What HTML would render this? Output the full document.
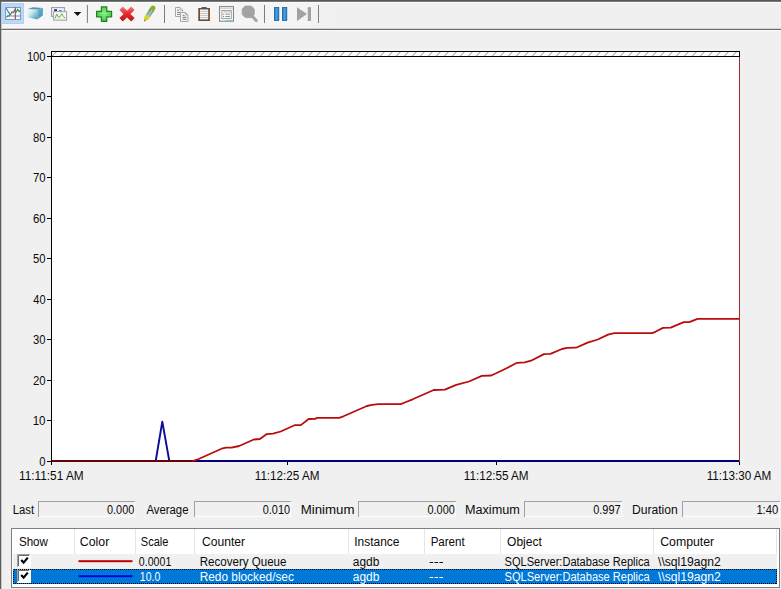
<!DOCTYPE html>
<html>
<head>
<meta charset="utf-8">
<title>Performance Monitor</title>
<style>
html,body{margin:0;padding:0;background:#f0f0f0;overflow:hidden;}
body{width:781px;height:589px;position:relative;font-family:"Liberation Sans",sans-serif;}
svg{position:absolute;left:0;top:0;display:block;}
text{font-family:"Liberation Sans",sans-serif;font-size:12px;fill:#0a0a0a;}
text.w{fill:#ffffff;}
</style>
</head>
<body>
<svg width="781" height="589" viewBox="0 0 781 589">
<defs>
  <linearGradient id="tb" x1="0" y1="0" x2="0" y2="1">
    <stop offset="0" stop-color="#fcfcfc"/><stop offset="1" stop-color="#f0f0f0"/>
  </linearGradient>
  <pattern id="hatch" width="8" height="8" patternUnits="userSpaceOnUse" x="48.3" y="52">
    <rect width="8" height="8" fill="#fff"/>
    <path d="M-1,9 L9,-1 M-1,1 L1,-1 M7,9 L9,7" stroke="#6c6c6c" stroke-width="0.8"/>
  </pattern>
  <linearGradient id="gPause" x1="0" y1="0" x2="1" y2="0">
    <stop offset="0" stop-color="#1d6fb8"/><stop offset="0.5" stop-color="#45a6e8"/><stop offset="1" stop-color="#1d6fb8"/>
  </linearGradient>
  <linearGradient id="gCube" x1="0" y1="0" x2="1" y2="1">
    <stop offset="0" stop-color="#ffffff"/><stop offset="0.35" stop-color="#cfeaf4"/><stop offset="1" stop-color="#3f97ba"/>
  </linearGradient>
  <linearGradient id="gCube2" x1="0" y1="0" x2="1" y2="1">
    <stop offset="0" stop-color="#6fb6d2"/><stop offset="1" stop-color="#3f93b4"/>
  </linearGradient>
  <radialGradient id="gPlus" cx="0.5" cy="0.45" r="0.6">
    <stop offset="0" stop-color="#8af08a"/><stop offset="1" stop-color="#3fc43f"/>
  </radialGradient>
  <linearGradient id="gX" x1="0" y1="6" x2="0" y2="22" gradientUnits="userSpaceOnUse">
    <stop offset="0" stop-color="#e58a8a"/><stop offset="0.45" stop-color="#ee2a2a"/><stop offset="1" stop-color="#b81414"/>
  </linearGradient>
  <linearGradient id="tbh" x1="0" y1="0" x2="1" y2="0">
    <stop offset="0" stop-color="#f6f6f6"/><stop offset="0.85" stop-color="#f4f4f4"/><stop offset="1" stop-color="#f0f0f0"/>
  </linearGradient>
</defs>

<!-- window background -->
<rect x="0" y="0" width="781" height="589" fill="#f0f0f0"/>
<!-- toolbar -->
<rect x="0" y="0" width="781" height="1" fill="#585858"/>
<rect x="0" y="1" width="781" height="1" fill="#7a7a7a"/>
<rect x="1" y="3" width="340" height="25" fill="url(#tbh)"/>
<rect x="1" y="2" width="780" height="1" fill="#fbfbfb"/>
<rect x="0" y="0" width="1" height="589" fill="#5e5e5e"/>
<rect x="1" y="2" width="1" height="587" fill="#c8c8c8"/>
<rect x="1" y="29" width="780" height="1" fill="#6c6c6c"/>
<rect x="1" y="28" width="780" height="1" fill="#d2d2d2"/>
<rect x="2" y="30" width="779" height="1" fill="#fbfbfb"/>

<!-- TOOLBAR ICONS -->
<g id="icons">
  <!-- selected button bg -->
  <rect x="1.5" y="3.5" width="22" height="20" fill="#bbd9f6" stroke="#b0d0f0" stroke-width="1"/>
  <!-- icon1: graph -->
  <g>
    <rect x="5.5" y="7.5" width="15" height="12" fill="#eff5fc" stroke="#7c98c9" stroke-width="1"/>
    <rect x="6" y="16.6" width="14" height="2.4" fill="#fcf6f8"/>
    <path d="M11,16 H20" stroke="#7686b8" stroke-width="1"/>
    <path d="M6.2,8.2 L10,14.6" stroke="#5b6bb8" stroke-width="1.1"/>
    <path d="M6.4,17.4 L8,15.6 L9.4,16.2 L12,12 L13.4,12.6 L15,9.4" fill="none" stroke="#2e8648" stroke-width="1.15"/>
    <path d="M16,12.6 L17.6,9.4 L19.2,11.6 L20,10.6" fill="none" stroke="#3a9a3a" stroke-width="1.15"/>
    <rect x="14.8" y="7.5" width="1" height="12" fill="#9c3050"/>
  </g>
  <!-- icon2: cube -->
  <g>
    <path d="M27.6,9 L37.5,9.6 L37.2,19.6 L28.4,17.4 Z" fill="url(#gCube)"/>
    <path d="M27.6,9 L33,7.2 L43,8 L37.5,9.6 Z" fill="#5196b3"/>
    <path d="M37.5,9.6 L43,8 L42.8,15.6 L37.2,19.6 Z" fill="url(#gCube2)"/>
    <path d="M27.6,9 L28.4,17.4" stroke="#cfeaf4" stroke-width="0.7" fill="none"/>
  </g>
  <!-- icon3: picture stack -->
  <g>
    <rect x="51.6" y="7.6" width="12.8" height="8.8" fill="#eef1f8" stroke="#8a97b2" stroke-width="1"/>
    <rect x="54.2" y="9.2" width="2.8" height="1.9" fill="#6a0f35"/>
    <rect x="59" y="10" width="2.6" height="1.2" fill="#4e78c8"/>
    <rect x="53.6" y="11.6" width="13" height="8.6" fill="#f3f7ef" stroke="#97a3b8" stroke-width="1"/>
    <path d="M55,18.6 L56.8,14 L58.4,17.2 L60,16.8 L61.8,13.6 L63.4,16.6 L65.2,18" fill="none" stroke="#6db05c" stroke-width="1"/>
    <path d="M55,19 H65.5" stroke="#cfe0b8" stroke-width="0.8"/>
  </g>
  <!-- dropdown arrow -->
  <path d="M73.7,12 H81.3 L77.5,16.1 Z" fill="#111"/>
  <!-- separators -->
  <rect x="86.9" y="5" width="1" height="18" fill="#7d7d7d"/>
  <rect x="164" y="5" width="1" height="18" fill="#7d7d7d"/>
  <rect x="264" y="5" width="1" height="18" fill="#7d7d7d"/>
  <rect x="318" y="5" width="1" height="18" fill="#7d7d7d"/>
  <!-- plus -->
  <path d="M101.4,6.9 H106.8 V11.4 H111.6 V16.8 H106.8 V21.3 H101.4 V16.8 H96.6 V11.4 H101.4 Z" fill="url(#gPlus)" stroke="#1f801f" stroke-width="1.2" stroke-linejoin="round"/>
  <!-- red X -->
  <path d="M121.1,8.2 L132.9,19.7 M132.9,8.200 L121.1,19.7" stroke="url(#gX)" stroke-width="4.8" stroke-linecap="butt"/>
  <!-- pencil -->
  <g>
    <path d="M144.5,16.2 L148.9,19.1 L144.2,21.5 Z" fill="#cdce1c"/>
    <path d="M144.2,21.5 L144.5,19.5 L146,20.5 Z" fill="#77770f"/>
    <path d="M148.3,15.25 L146.6,17.85" stroke="#d6d82c" stroke-width="5"/>
    <path d="M151.58,10.18 L148.1,15.55" stroke="#86a9b6" stroke-width="5"/>
    <path d="M152.9,8.1 L151.4,10.4" stroke="#8dac2c" stroke-width="5" stroke-linecap="round"/>
    <path d="M151.7,10 L151.2,10.800" stroke="#6a9c48" stroke-width="5"/>
    <path d="M152.3,9.6 L148.2,16" stroke="#bcd6dc" stroke-width="1.1" opacity="0.8"/>
  </g>
  <!-- copy -->
  <g>
    <path d="M175.5,7.5 H180 L182.5,10 V16.5 H175.5 Z" fill="#f6f6f6" stroke="#a4a8ac" stroke-width="1"/>
    <path d="M180,7.5 V10 H182.5" fill="none" stroke="#a4a8ac" stroke-width="0.8"/>
    <path d="M177,10.2 H179 M177,12.4 H181 M177,14.4 H180" stroke="#7c858c" stroke-width="1"/>
    <path d="M180.5,12.5 H185.5 L188,15 V21.5 H180.5 Z" fill="#f6f6f6" stroke="#a4a8ac" stroke-width="1"/>
    <path d="M185.5,12.500 V15 H188" fill="none" stroke="#a4a8ac" stroke-width="0.8"/>
    <path d="M182.6,15.2 H184.6 M182.6,17.3 H186.4 M182.600,19.3 H186.4" stroke="#6c757c" stroke-width="1.1"/>
  </g>
  <!-- clipboard -->
  <g>
    <rect x="198.3" y="8" width="11.6" height="13" fill="#6e4a2e"/>
    <rect x="200" y="9.4" width="8.2" height="10" fill="#fbfbfb"/>
    <rect x="201.6" y="7" width="5" height="2.2" fill="#555c5c"/>
    <path d="M200.2,11.4 H208 M200.2,13.5 H208 M200.2,15.6 H208 M200.2,17.7 H208" stroke="#b4b8bc" stroke-width="0.9"/>
  </g>
  <!-- properties -->
  <g>
    <rect x="219.5" y="6.6" width="14" height="14.6" fill="#f4f4f4" stroke="#858585" stroke-width="1"/>
    <path d="M220,8.3 H233" stroke="#c4c4c4" stroke-width="0.8"/>
    <rect x="221.9" y="10.5" width="9.4" height="8" fill="#fafafa" stroke="#9c9c9c" stroke-width="0.9"/>
    <path d="M224.2,10.5 V12 H231" fill="none" stroke="#b0b0b0" stroke-width="0.8"/>
    <path d="M223,14.2 H224.2 M225.4,14.2 H230 M223,16.5 H224.2 M225.4,16.5 H230" stroke="#8c9296" stroke-width="1"/>
    <path d="M225.5,20.6 H232.5" stroke="#7fc3d6" stroke-width="1.1"/>
  </g>
  <!-- magnifier -->
  <g>
    <path d="M245.2,6 H251.2 L254.3,9 V14.600 L251.2,17.6 H245.2 L242.2,14.6 V9 Z" fill="#a2a2a2" stroke="#a2a2a2" stroke-width="0.8" stroke-linejoin="round"/>
    <path d="M251.5,15.5 L256.2,20.6" stroke="#a2a2a2" stroke-width="3" stroke-linecap="round"/>
  </g>
  <!-- pause -->
  <rect x="274.4" y="7.5" width="4.4" height="13" fill="url(#gPause)" stroke="#1a63a6" stroke-width="0.8"/>
  <rect x="282.4" y="7.5" width="4.4" height="13" fill="url(#gPause)" stroke="#1a63a6" stroke-width="0.8"/>
  <!-- step -->
  <path d="M297,7.2 L307,14 L297,20.9 Z" fill="#a2a2a2"/>
  <rect x="307.8" y="7.2" width="3.2" height="13.8" fill="#a2a2a2"/>
</g>

<!-- CHART -->
<g id="chart">
  <rect x="51" y="51" width="689" height="411" fill="#ffffff"/>
  <rect x="51.5" y="51.5" width="688" height="5" fill="url(#hatch)" stroke="#000" stroke-width="1"/>
  <!-- left axis -->
  <rect x="51" y="51" width="1" height="414" fill="#000"/>
  <!-- y ticks -->
  <g fill="#000">
    <rect x="47" y="56" width="4" height="1"/>
    <rect x="47" y="96" width="4" height="1"/>
    <rect x="47" y="137" width="4" height="1"/>
    <rect x="47" y="177" width="4" height="1"/>
    <rect x="47" y="218" width="4" height="1"/>
    <rect x="47" y="258" width="4" height="1"/>
    <rect x="47" y="299" width="4" height="1"/>
    <rect x="47" y="339" width="4" height="1"/>
    <rect x="47" y="380" width="4" height="1"/>
    <rect x="47" y="420" width="4" height="1"/>
    <rect x="47" y="461" width="4" height="1"/>
    <rect x="287" y="461" width="1" height="4"/>
    <rect x="496" y="461" width="1" height="4"/>
    <rect x="739" y="461" width="1" height="4"/>
  </g>
  <!-- blue series -->
  <rect x="52" y="460" width="688" height="2" fill="#000074"/>
  <path d="M155.7,461 L162.3,421.6 L169.3,461" fill="none" stroke="#0c0c96" stroke-width="1.9" stroke-linejoin="round"/>
  <!-- red series -->
  <rect x="52" y="460" width="141" height="2" fill="#650404"/>
  <path d="M192.5,461.2 L197,459.7 L221.5,448.7 L226.1,447.6 L231.5,447.6 L239.2,446 L253.8,439.5 L259.9,439 L266.8,434.1 L273,433.7 L280.7,431.5 L294.5,425.2 L300.8,425.1 L308.7,419 L315.6,418.8 L316.6,417.8 L339.1,417.8 L343.5,416.3 L366.9,406.0 L372,404.9 L378.4,404.1 L400.7,404.1 L406,402.0 L412.7,399.3 L433.7,390.0 L444.8,389.6 L456.2,384.9 L469,381.5 L481.8,375.9 L491.3,375.5 L503,370.0 L517,362.8 L524.8,362.3 L531,360.7 L544,354.1 L550.4,353.8 L562,349.0 L567,347.9 L576,347.7 L587.6,342.6 L597.8,339.5 L608,334.6 L614.4,333.1 L652,333.1 L655.4,331.8 L663,327.9 L670.7,327.6 L683.8,322.1 L689.2,322.1 L697.6,318.9 L739,318.9" fill="none" stroke="#b90d0d" stroke-width="1.8" stroke-linejoin="round"/>
  <!-- time cursor -->
  <rect x="739" y="57" width="1" height="405" fill="#a52a2a"/>
</g>

<g id="stats">
<rect x="38" y="501" width="97" height="16" fill="#f0f0f0"/>
<rect x="38" y="501" width="97" height="1" fill="#a0a0a0"/>
<rect x="38" y="501" width="1" height="16" fill="#a0a0a0"/>
<rect x="39" y="516" width="96" height="1" fill="#ffffff"/>
<rect x="134" y="502" width="1" height="15" fill="#ffffff"/>
<rect x="194" y="501" width="97" height="16" fill="#f0f0f0"/>
<rect x="194" y="501" width="97" height="1" fill="#a0a0a0"/>
<rect x="194" y="501" width="1" height="16" fill="#a0a0a0"/>
<rect x="195" y="516" width="96" height="1" fill="#ffffff"/>
<rect x="290" y="502" width="1" height="15" fill="#ffffff"/>
<rect x="358" y="501" width="98" height="16" fill="#f0f0f0"/>
<rect x="358" y="501" width="98" height="1" fill="#a0a0a0"/>
<rect x="358" y="501" width="1" height="16" fill="#a0a0a0"/>
<rect x="359" y="516" width="97" height="1" fill="#ffffff"/>
<rect x="455" y="502" width="1" height="15" fill="#ffffff"/>
<rect x="524" y="501" width="98" height="16" fill="#f0f0f0"/>
<rect x="524" y="501" width="98" height="1" fill="#a0a0a0"/>
<rect x="524" y="501" width="1" height="16" fill="#a0a0a0"/>
<rect x="525" y="516" width="97" height="1" fill="#ffffff"/>
<rect x="621" y="502" width="1" height="15" fill="#ffffff"/>
<rect x="682" y="501" width="98" height="16" fill="#f0f0f0"/>
<rect x="682" y="501" width="98" height="1" fill="#a0a0a0"/>
<rect x="682" y="501" width="1" height="16" fill="#a0a0a0"/>
<rect x="683" y="516" width="97" height="1" fill="#ffffff"/>
<rect x="779" y="502" width="1" height="15" fill="#ffffff"/>
</g>
<g id="list">
<rect x="11.5" y="528.5" width="768" height="59" fill="#ffffff" stroke="#7b7e84" stroke-width="1"/>
<rect x="74" y="529" width="1" height="25" fill="#e5e5e5"/>
<rect x="135" y="529" width="1" height="25" fill="#e5e5e5"/>
<rect x="194" y="529" width="1" height="25" fill="#e5e5e5"/>
<rect x="348" y="529" width="1" height="25" fill="#e5e5e5"/>
<rect x="424" y="529" width="1" height="25" fill="#e5e5e5"/>
<rect x="500" y="529" width="1" height="25" fill="#e5e5e5"/>
<rect x="653" y="529" width="1" height="25" fill="#e5e5e5"/>
<rect x="776" y="529" width="1" height="25" fill="#e5e5e5"/>
<rect x="13" y="554" width="764" height="15" fill="#f0f0f0"/>
<rect x="13" y="569" width="764" height="15" fill="#0078d7"/>
<rect x="17" y="554" width="14" height="14" fill="#fff"/>
<path d="M17.5,567 V554.5 H30" fill="none" stroke="#a0a0a0" stroke-width="1"/>
<path d="M18.5,566 V555.5 H29" fill="none" stroke="#696969" stroke-width="1"/>
<path d="M21.2,560 L23.6,562.6 L27.8,557.6" fill="none" stroke="#000" stroke-width="2.2"/>
<rect x="17" y="569" width="14" height="14" fill="#fff"/>
<path d="M17.5,582 V569.5 H30" fill="none" stroke="#a0a0a0" stroke-width="1"/>
<path d="M18.5,581 V570.5 H29" fill="none" stroke="#696969" stroke-width="1"/>
<path d="M21.2,575 L23.6,577.6 L27.8,572.6" fill="none" stroke="#000" stroke-width="2.2"/>
<path d="M13.5,569.5 H776.5 V583.5 H13.5 Z" fill="none" stroke="#000" stroke-width="1" stroke-dasharray="1 1" shape-rendering="crispEdges"/>
<rect x="78.5" y="560.2" width="54" height="2" fill="#c00000"/>
<rect x="78.5" y="575.2" width="54" height="2" fill="#0000e0"/>
<rect x="429.6" y="562" width="3.6" height="1" fill="#111"/>
<rect x="434.5" y="562" width="3.6" height="1" fill="#111"/>
<rect x="439.4" y="562" width="3.6" height="1" fill="#111"/>
<rect x="429.6" y="577" width="3.6" height="1" fill="#fff"/>
<rect x="434.5" y="577" width="3.6" height="1" fill="#fff"/>
<rect x="439.4" y="577" width="3.6" height="1" fill="#fff"/>
</g>
<g id="labels">
<text x="26.88" y="60.9" textLength="18.70" lengthAdjust="spacingAndGlyphs">100</text>
<text x="32.91" y="100.9" textLength="12.64" lengthAdjust="spacingAndGlyphs">90</text>
<text x="33.03" y="141.9" textLength="12.51" lengthAdjust="spacingAndGlyphs">80</text>
<text x="32.91" y="181.9" textLength="12.64" lengthAdjust="spacingAndGlyphs">70</text>
<text x="32.91" y="222.9" textLength="12.64" lengthAdjust="spacingAndGlyphs">60</text>
<text x="33.03" y="262.9" textLength="12.51" lengthAdjust="spacingAndGlyphs">50</text>
<text x="33.27" y="303.9" textLength="12.26" lengthAdjust="spacingAndGlyphs">40</text>
<text x="33.03" y="343.9" textLength="12.51" lengthAdjust="spacingAndGlyphs">30</text>
<text x="32.91" y="384.9" textLength="12.64" lengthAdjust="spacingAndGlyphs">20</text>
<text x="32.65" y="424.9" textLength="12.90" lengthAdjust="spacingAndGlyphs">10</text>
<text x="39.23" y="465.9" textLength="6.27" lengthAdjust="spacingAndGlyphs">0</text>
<text x="18.94" y="479.7" textLength="64.73" lengthAdjust="spacingAndGlyphs">11:11:51 AM</text>
<text x="254.75" y="479.7" textLength="64.72" lengthAdjust="spacingAndGlyphs">11:12:25 AM</text>
<text x="463.85" y="479.7" textLength="64.72" lengthAdjust="spacingAndGlyphs">11:12:55 AM</text>
<text x="706.65" y="479.7" textLength="64.72" lengthAdjust="spacingAndGlyphs">11:13:30 AM</text>
<text x="12.76" y="513.8" textLength="21.29" lengthAdjust="spacingAndGlyphs">Last</text>
<text x="146.38" y="513.8" textLength="42.07" lengthAdjust="spacingAndGlyphs">Average</text>
<text x="300.69" y="513.8" textLength="53.78" lengthAdjust="spacingAndGlyphs">Minimum</text>
<text x="464.95" y="513.8" textLength="54.85" lengthAdjust="spacingAndGlyphs">Maximum</text>
<text x="631.99" y="513.8" textLength="45.75" lengthAdjust="spacingAndGlyphs">Duration</text>
<text x="107.05" y="513.8" textLength="27.23" lengthAdjust="spacingAndGlyphs">0.000</text>
<text x="262.75" y="513.8" textLength="27.23" lengthAdjust="spacingAndGlyphs">0.010</text>
<text x="427.55" y="513.8" textLength="27.23" lengthAdjust="spacingAndGlyphs">0.000</text>
<text x="593.24" y="513.8" textLength="27.35" lengthAdjust="spacingAndGlyphs">0.997</text>
<text x="756.38" y="513.8" textLength="21.87" lengthAdjust="spacingAndGlyphs">1:40</text>
<text x="18.90" y="545.8" textLength="29.02" lengthAdjust="spacingAndGlyphs">Show</text>
<text x="79.76" y="545.8" textLength="29.52" lengthAdjust="spacingAndGlyphs">Color</text>
<text x="140.82" y="545.8" textLength="27.65" lengthAdjust="spacingAndGlyphs">Scale</text>
<text x="202.07" y="545.8" textLength="43.02" lengthAdjust="spacingAndGlyphs">Counter</text>
<text x="354.28" y="545.8" textLength="45.21" lengthAdjust="spacingAndGlyphs">Instance</text>
<text x="430.64" y="545.8" textLength="34.07" lengthAdjust="spacingAndGlyphs">Parent</text>
<text x="507.07" y="545.8" textLength="34.68" lengthAdjust="spacingAndGlyphs">Object</text>
<text x="660.16" y="545.8" textLength="54.03" lengthAdjust="spacingAndGlyphs">Computer</text>
<text x="138.86" y="566.0" textLength="32.45" lengthAdjust="spacingAndGlyphs">0.0001</text>
<text x="199.74" y="566.0" textLength="86.69" lengthAdjust="spacingAndGlyphs">Recovery Queue</text>
<text x="352.80" y="566.0" textLength="26.54" lengthAdjust="spacingAndGlyphs">agdb</text>
<text x="504.62" y="566.0" textLength="145.11" lengthAdjust="spacingAndGlyphs">SQLServer:Database Replica</text>
<text x="658.00" y="566.0" textLength="62.86" lengthAdjust="spacingAndGlyphs">\\sql19agn2</text>
<text x="139.84" y="581.0" textLength="20.38" lengthAdjust="spacingAndGlyphs" class="w">10.0</text>
<text x="199.71" y="581.0" textLength="94.17" lengthAdjust="spacingAndGlyphs" class="w">Redo blocked/sec</text>
<text x="352.80" y="581.0" textLength="26.54" lengthAdjust="spacingAndGlyphs" class="w">agdb</text>
<text x="504.62" y="581.0" textLength="145.11" lengthAdjust="spacingAndGlyphs" class="w">SQLServer:Database Replica</text>
<text x="658.00" y="581.0" textLength="62.86" lengthAdjust="spacingAndGlyphs" class="w">\\sql19agn2</text>
</g>
</svg>
</body>
</html>
